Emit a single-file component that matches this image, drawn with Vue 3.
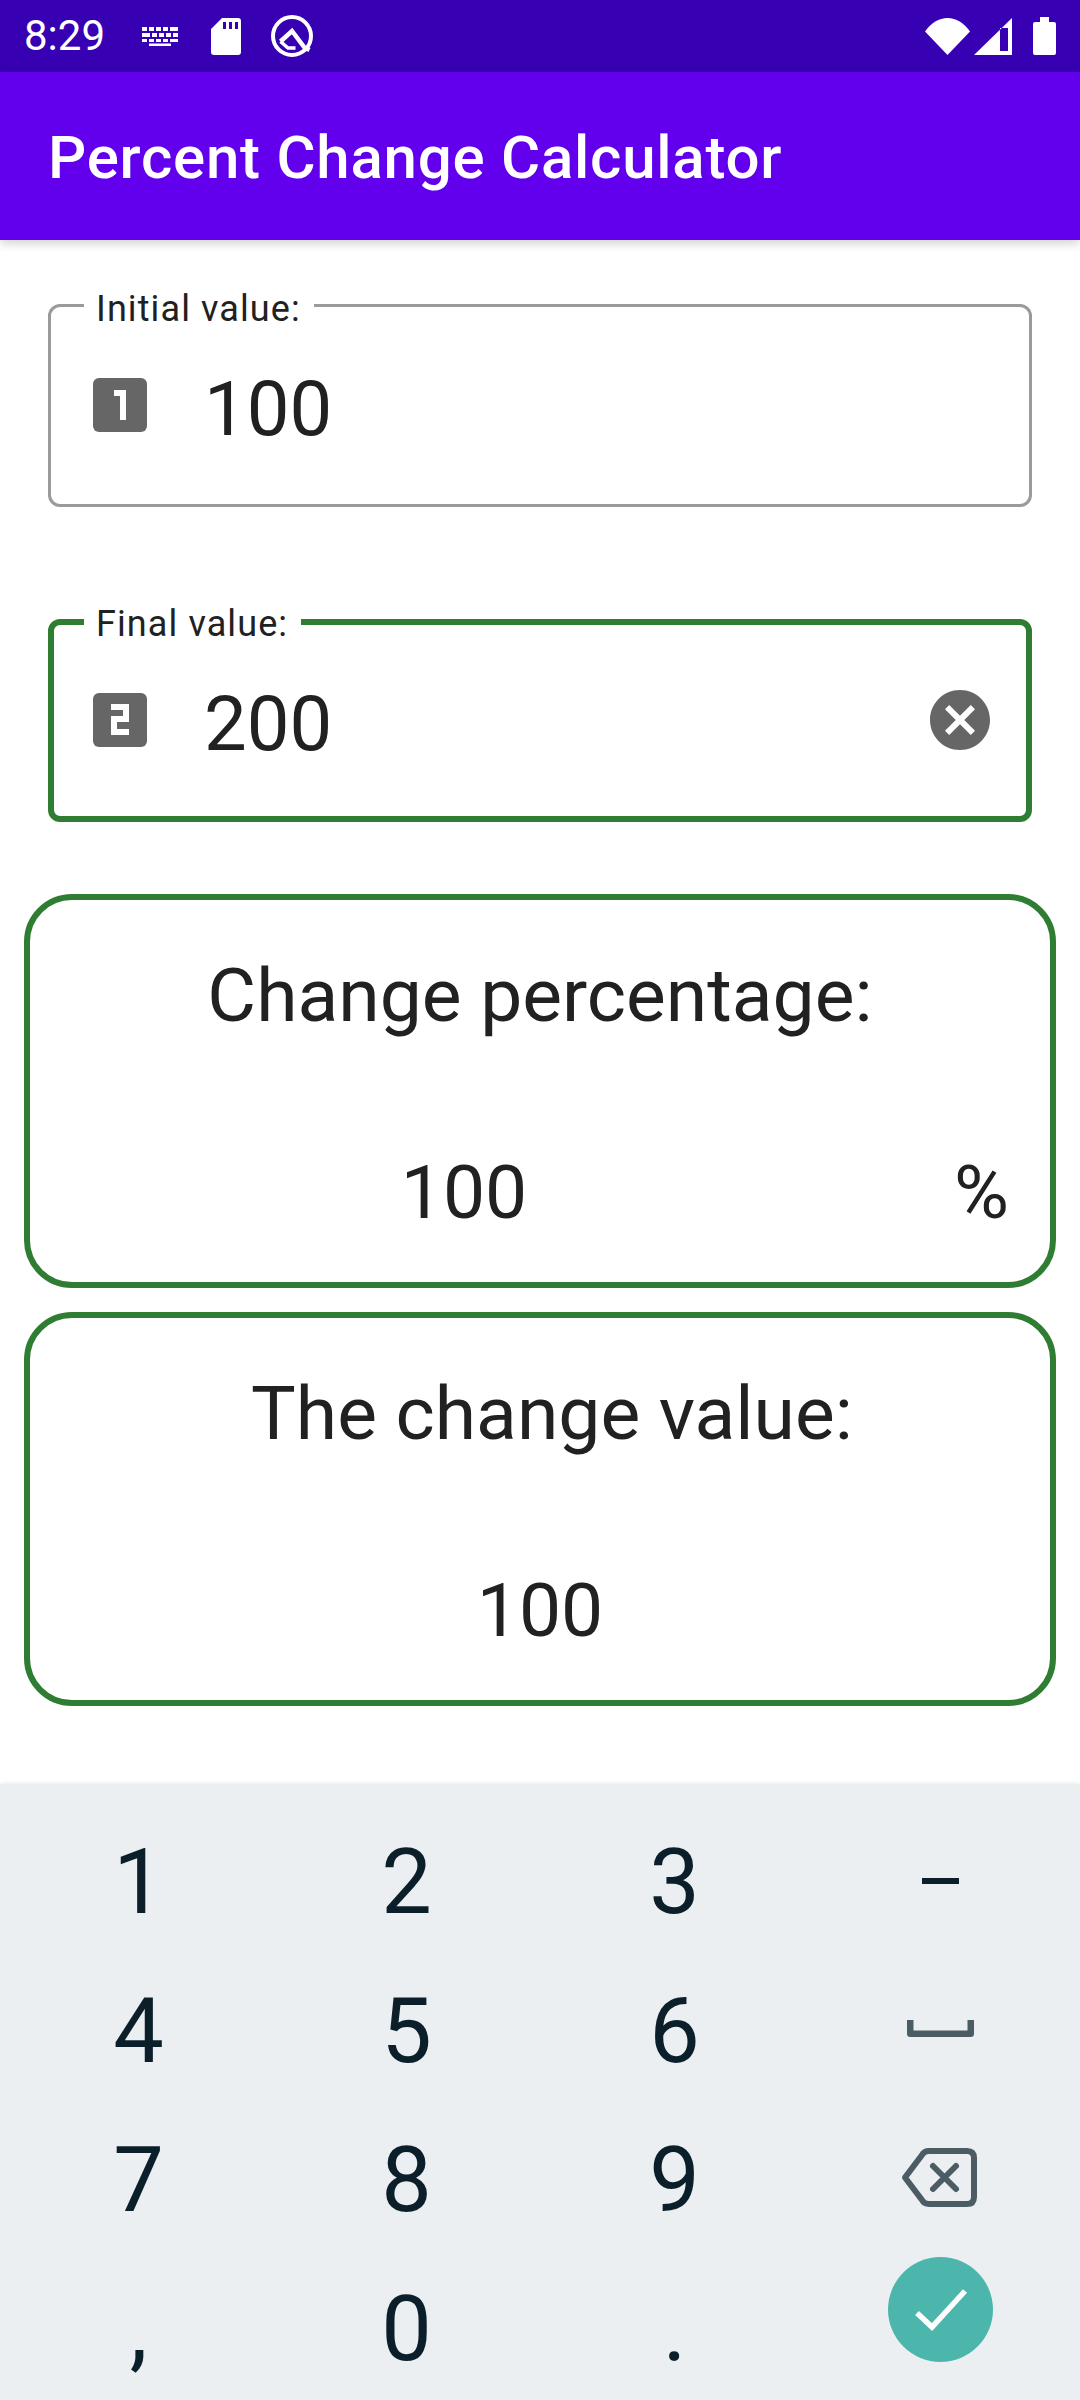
<template>
  <div class="screen">
    <div class="status-bar">
      <span class="clock">8:29</span>
      <svg class="ic-keyboard" viewBox="0 0 36 19" fill="#fff">
        <path d="M0 0h5v4H0zM7 0h5v4H7zM14 0h5v4h-5zM21 0h5v4h-5zM28 0h8v4h-8zM0 6h8v4H0zM10 6h5v4h-5zM17 6h5v4h-5zM24 6h5v4h-5zM31 6h5v4h-5zM0 12h5v3H0zM7 12h5v3H7zM14 12h5v3h-5zM21 12h5v3h-5zM28 12h8v3h-8zM7 16.500h22V19H7z"/>
      </svg>
      <svg class="ic-sd" viewBox="0 0 30 37" fill="#fff">
        <path d="M11 0h16a3 3 0 0 1 3 3v31a3 3 0 0 1-3 3H3a3 3 0 0 1-3-3V11zM12 4v7h3V4zM18 4v7h3V4zM24 4v7h3V4z" fill-rule="evenodd"/>
      </svg>
      <svg class="ic-q" viewBox="0 0 42 43" fill="none" stroke="#fff">
        <circle cx="21" cy="21" r="19" stroke-width="4"/>
        <path d="M9.500 26.500L21 16l12.500 16.500 5 2.500" stroke-width="4.500"/>
        <path d="M9.500 26.500L17 33h7.500" stroke-width="3.500"/>
      </svg>
      <span class="status-gap"></span>
      <svg class="ic-wifi" viewBox="0 0 45 37" fill="#fff">
        <path d="M0 13.500C6 5 14 0 22.500 0S39 5 45 13.500L22.500 37z"/>
      </svg>
      <svg class="ic-signal" viewBox="0 0 38 37" fill="#fff">
        <path d="M38 0v37H0zM26 10v23h8V10z" fill-rule="evenodd"/>
      </svg>
      <svg class="ic-battery" viewBox="0 0 23 38" fill="#fff">
        <path d="M7 0h9v5h5a2 2 0 0 1 2 2v29a2 2 0 0 1-2 2H2a2 2 0 0 1-2-2V7a2 2 0 0 1 2-2h5z"/>
      </svg>
    </div>

    <header class="app-bar">Percent Change Calculator</header>

    <main class="content">
      <div class="field">
        <label class="field-label">Initial value:</label>
        <svg class="field-icon" viewBox="0 0 54 54">
          <rect width="54" height="54" rx="6" fill="#666"/>
          <path d="M21 12h12v30h-6V18h-6z" fill="#fff"/>
        </svg>
        <span class="field-value">{{ initial }}</span>
      </div>

      <div class="field focused">
        <label class="field-label">Final value:</label>
        <svg class="field-icon" viewBox="0 0 54 54">
          <rect width="54" height="54" rx="6" fill="#666"/>
          <path d="M18 11h18v18H24v7h12v6H18V23h12v-6H18z" fill="#fff"/>
        </svg>
        <span class="field-value">{{ final }}</span>
        <svg class="clear-icon" viewBox="0 0 24 24" fill="#666">
          <path d="M12 2C6.470 2 2 6.470 2 12s4.470 10 10 10 10-4.470 10-10S17.530 2 12 2zm5 13.590L15.590 17 12 13.410 8.410 17 7 15.590 10.590 12 7 8.410 8.410 7 12 10.590 15.590 7 17 8.410 13.410 12 17 15.590z"/>
        </svg>
      </div>

      <section class="card">
        <div class="card-title">Change percentage:</div>
        <div class="card-row">
          <span class="card-value">{{ percent }}</span>
          <span class="card-unit">%</span>
        </div>
      </section>

      <section class="card second">
        <div class="card-title">The change value:</div>
        <div class="card-row">
          <span class="card-value">{{ change }}</span>
        </div>
      </section>
    </main>

    <div class="keyboard">
      <template v-for="key in keys" :key="key">
        <div v-if="key === 'space'" class="key">
          <svg class="ic-space" viewBox="0 0 67 17" fill="none" stroke="#4c5c65" stroke-width="6.500" stroke-linejoin="round">
            <path d="M3.250 0v13.750h60.500V0"/>
          </svg>
        </div>
        <div v-else-if="key === 'back'" class="key">
          <svg class="ic-back" viewBox="0 0 76 59" fill="none" stroke="#4c5c65" stroke-width="6" stroke-linecap="round" stroke-linejoin="round">
            <path d="M4 29.500L21 7q2-4 7-4h38q7 0 7 7v39q0 7-7 7H28q-5 0-7-4z"/>
            <path d="M32 18l23 23M55 18L32 41"/>
          </svg>
        </div>
        <div v-else-if="key === 'done'" class="key">
          <div class="done-btn">
            <svg viewBox="0 0 105 105" fill="none" stroke="#fff" stroke-width="5.500">
              <path d="M29 56l15 14 33-36"/>
            </svg>
          </div>
        </div>
        <div v-else-if="key === 'minus'" class="key">
          <span class="minus"></span>
        </div>
        <div v-else class="key digit">{{ key }}</div>
      </template>
    </div>
  </div>
</template>

<script setup>
import { computed, ref } from 'vue'

const initial = ref(100)
const final = ref(200)

const change = computed(() => final.value - initial.value)
const percent = computed(() => (change.value / initial.value) * 100)

const keys = ['1', '2', '3', 'minus', '4', '5', '6', 'space', '7', '8', '9', 'back', ',', '0', '.', 'done']
</script>

<style>
html,
body {
  margin: 0;
  background: #fff;
}
</style>

<style scoped>
.screen {
  width: 1080px;
  height: 2400px;
  display: flex;
  flex-direction: column;
  overflow: hidden;
  font-family: Roboto, "Liberation Sans", sans-serif;
  color: #212121;
}

.status-bar {
  height: 72px;
  flex: none;
  display: flex;
  align-items: center;
  padding: 0 24px;
  background: #3700b3;
  color: #fff;
}

.clock {
  font-size: 42px;
  line-height: 72px;
  width: 118px;
}

.status-bar svg {
  display: block;
  flex: none;
}

.ic-keyboard {
  width: 36px;
  height: 19px;
  margin-top: 1px;
}

.ic-sd {
  width: 30px;
  height: 37px;
  margin-left: 33px;
}

.ic-q {
  width: 42px;
  height: 43px;
  margin-left: 30px;
}

.status-gap {
  flex: 1;
}

.ic-wifi {
  width: 45px;
  height: 37px;
}

.ic-signal {
  width: 38px;
  height: 37px;
  margin-left: 4px;
}

.ic-battery {
  width: 23px;
  height: 38px;
  margin-left: 21px;
}

.app-bar {
  height: 168px;
  flex: none;
  box-sizing: border-box;
  display: flex;
  align-items: center;
  padding: 2px 0 0 48px;
  background: #6200ee;
  color: #fff;
  font-size: 60px;
  font-weight: 500;
  letter-spacing: 0.75px;
  box-shadow: 0 3px 10px rgba(0, 0, 0, 0.2);
  position: relative;
}

.content {
  flex: 1;
  padding: 64px 24px 0;
}

.field {
  position: relative;
  height: 203px;
  margin: 0 24px 112px;
  box-sizing: border-box;
  border: 3px solid #9a9a9a;
  border-radius: 12px;
  display: flex;
  align-items: center;
  padding-left: 42px;
}

.field.focused {
  border: 6px solid #2e7d32;
  padding-left: 39px;
  margin-bottom: 72px;
}

.field-label {
  position: absolute;
  left: 33px;
  top: -22px;
  padding: 0 13px 0 12px;
  background: #fff;
  font-size: 36px;
  line-height: 48px;
  letter-spacing: 1.1px;
  color: #212121;
}

.focused .field-label {
  left: 30px;
  top: -25px;
}

.field-icon {
  width: 54px;
  height: 54px;
  flex: none;
  margin-top: -2px;
}

.field-value {
  margin-left: 57px;
  font-size: 76px;
  line-height: 88px;
  padding-top: 6px;
}

.clear-icon {
  width: 72px;
  height: 72px;
  margin-left: auto;
  margin-right: 30px;
  margin-top: -2px;
}

.card {
  box-sizing: border-box;
  height: 394px;
  margin-bottom: 24px;
  border: 6px solid #2e7d32;
  border-radius: 48px;
  padding-top: 51px;
  font-size: 75px;
  line-height: 88px;
}

.card-title {
  text-align: center;
}

.second .card-title {
  padding-left: 24px;
}

.card-row {
  display: flex;
  gap: 56px;
  margin-top: 109px;
  padding-right: 41px;
}

.second .card-row {
  padding-right: 0;
}

.card-value {
  flex: 1;
  text-align: center;
}

.keyboard {
  height: 616px;
  flex: none;
  box-sizing: border-box;
  display: grid;
  grid-template-columns: repeat(4, 268px);
  grid-auto-rows: 149px;
  padding: 21px 4px 0;
  background: #eceff1;
  box-shadow: 0 -1px 4px rgba(0, 0, 0, 0.08);
}

.key {
  display: flex;
  align-items: center;
  justify-content: center;
}

.digit {
  font-size: 90px;
  line-height: 1;
  color: #0b1f2a;
  padding: 6px 0 0 1px;
}

.minus {
  width: 37px;
  height: 6px;
  background: #0b1f2a;
  margin: 2px 4px 0 0;
}

.ic-space {
  width: 67px;
  height: 17px;
  margin: -1px 4px 0 0;
}

.ic-back {
  width: 76px;
  height: 59px;
  margin-right: 7px;
}

.done-btn {
  width: 105px;
  height: 105px;
  margin: 0 4px 34px 0;
  border-radius: 50%;
  background: #4db6ac;
}

.done-btn svg {
  display: block;
}
</style>
